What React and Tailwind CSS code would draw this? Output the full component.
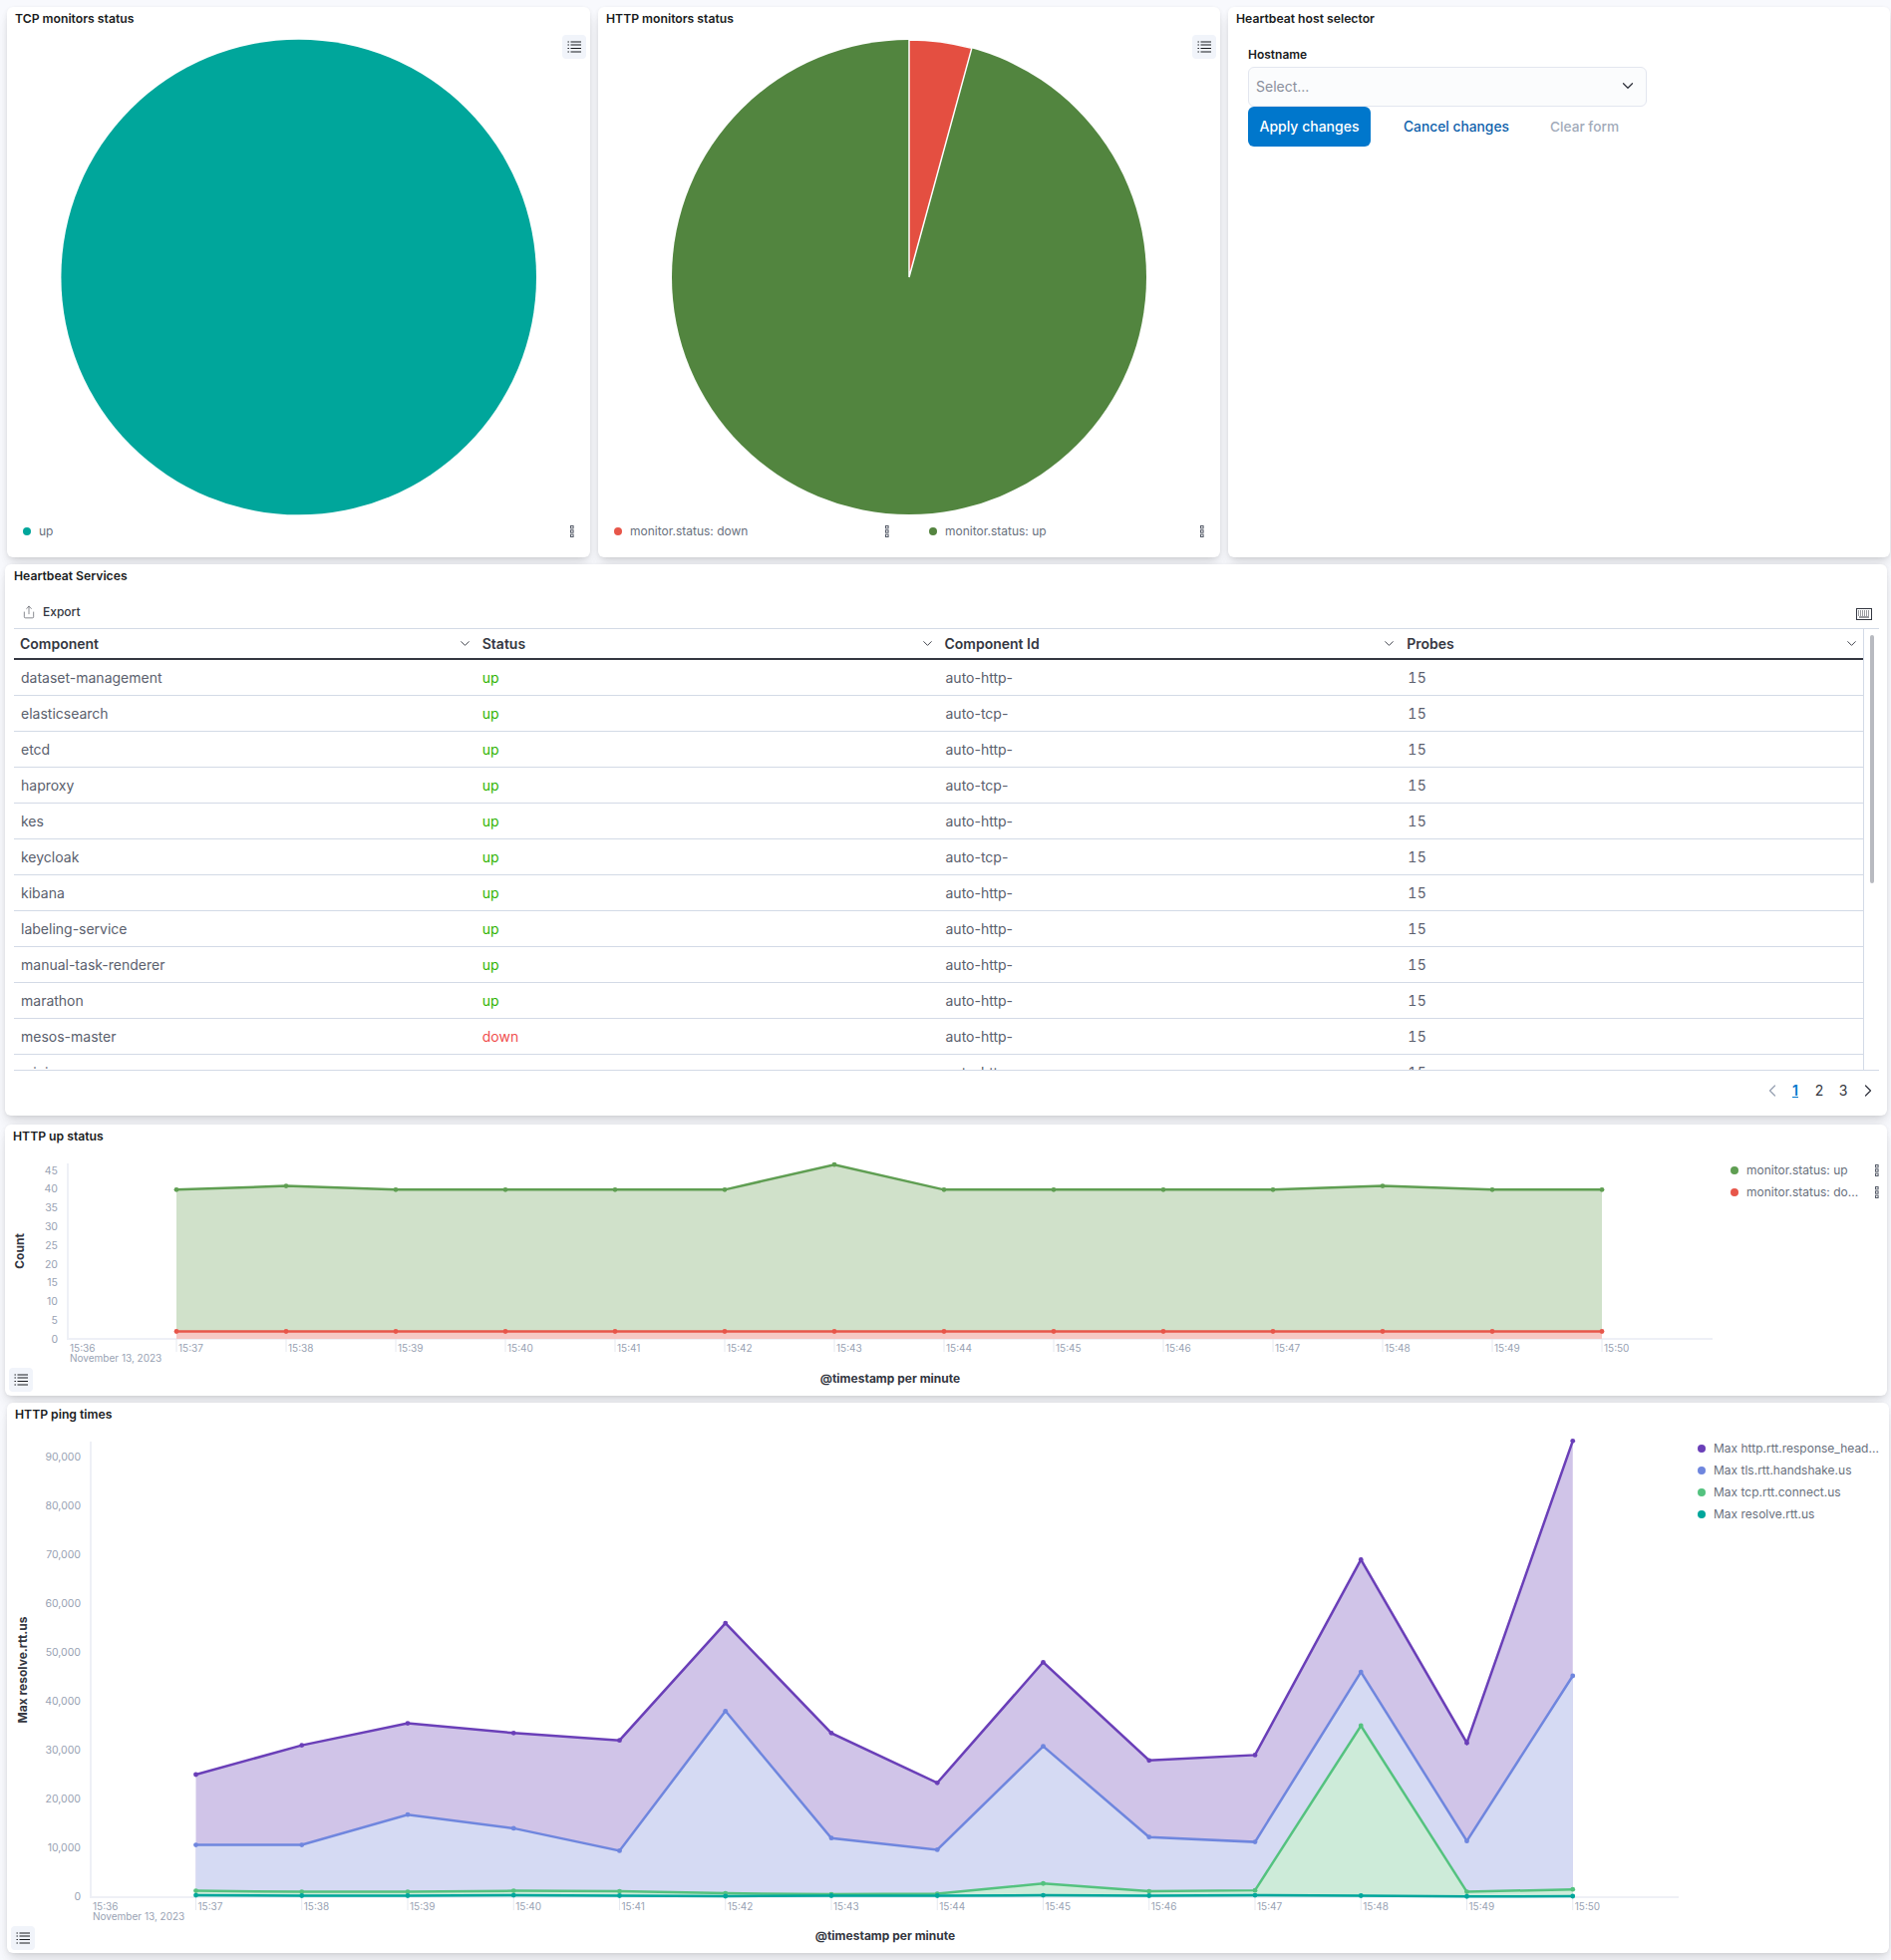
import React from 'react';
import { ChevronDown, ChevronLeft, ChevronRight, Share } from 'lucide-react';

const rows = [
    ['dataset-management', 'up', 'auto-http-'],
    ['elasticsearch', 'up', 'auto-tcp-'],
    ['etcd', 'up', 'auto-http-'],
    ['haproxy', 'up', 'auto-tcp-'],
    ['kes', 'up', 'auto-http-'],
    ['keycloak', 'up', 'auto-tcp-'],
    ['kibana', 'up', 'auto-http-'],
    ['labeling-service', 'up', 'auto-http-'],
    ['manual-task-renderer', 'up', 'auto-http-'],
    ['marathon', 'up', 'auto-http-'],
    ['mesos-master', 'down', 'auto-http-'],
    ['minio', 'up', 'auto-http-'],
];

const minutes = ['15:37', '15:38', '15:39', '15:40', '15:41', '15:42', '15:43', '15:44', '15:45', '15:46', '15:47', '15:48', '15:49', '15:50'];

const upSeries = [
    { values: [2, 2, 2, 2, 2, 2, 2, 2, 2, 2, 2, 2, 2, 2], line: '#e7564a', area: '#f6c8c4' },
];
const upTop = { values: [39.8, 40.8, 39.8, 39.8, 39.8, 39.8, 46.5, 39.8, 39.8, 39.8, 39.8, 40.8, 39.8, 39.8], line: '#5f9e52', area: '#d0e1ca' };

const pingSeries = [
    { values: [25000, 31000, 35500, 33500, 32000, 56000, 33500, 23300, 48000, 27900, 29000, 69000, 31500, 93300], line: '#6a3fb8', area: '#d0c4e8' },
    { values: [10600, 10600, 16800, 14000, 9400, 38000, 12000, 9600, 30800, 12200, 11200, 46000, 11400, 45200], line: '#6f86de', area: '#d5daf3' },
    { values: [1200, 1000, 1000, 1200, 1100, 700, 500, 600, 2700, 1100, 1300, 35000, 1000, 1500], line: '#54c27f', area: '#cdebd9' },
    { values: [300, 200, 200, 300, 200, 100, 200, 200, 300, 200, 300, 200, 50, 100], line: '#00a69b', area: '#b5e5e0' },
];

const ListIcon = () => (
    <svg width="14" height="12" viewBox="0 0 14 12" fill="#1a1c21">
        {[1, 4, 7.5, 11].map((y) => (
            <g key={y}>
                <rect x="0.5" y={y - 0.5} width="1.4" height="1" />
                <rect x="3.5" y={y - 0.5} width="10.5" height="1" />
            </g>
        ))}
    </svg>
);

const BoxesIcon = () => (
    <svg width="4" height="12" viewBox="0 0 4 12" fill="none" stroke="#535966" strokeWidth="1">
        <rect x="0.5" y="0.5" width="2.6" height="2.4" />
        <rect x="0.5" y="4.8" width="2.6" height="2.4" />
        <rect x="0.5" y="9.1" width="2.6" height="2.4" />
    </svg>
);

const KeyboardIcon = () => (
    <svg width="16" height="12" viewBox="0 0 16 12" fill="none" stroke="#343741">
        <rect x="0.5" y="0.5" width="15" height="11" />
        <path d="M2 3h12M2 5h12M2 7h12" strokeDasharray="1 1" />
        <path d="M3 9h10" />
    </svg>
);

const Card = ({ className, children }) => (
    <div className={`relative bg-white rounded-[6px] shadow-[0_1px_4px_-1px_rgba(0,0,0,0.08),0_3px_8px_-1px_rgba(0,0,0,0.06),0_6px_12px_-1px_rgba(0,0,0,0.05),0_15px_15px_-1px_rgba(0,0,0,0.04)] ${className}`}>
        {children}
    </div>
);

const Title = ({ className, children }) => (
    <div className={`h-6 flex items-center text-[12.2px] font-semibold text-[#1a1c21] ${className}`}>{children}</div>
);

const ListButton = ({ className }) => (
    <div className={`absolute w-6 h-6 rounded-[4px] bg-[#f1f4fa] flex items-center justify-center ${className}`}>
        <ListIcon />
    </div>
);

const LegendItem = ({ color, label, menu, className }) => (
    <div className={`h-[22px] flex items-center text-[12px] text-[#69707d] ${className}`}>
        <span className={`w-2 h-2 rounded-full shrink-0 mr-2 ${color}`}></span>
        <span className="flex-1 whitespace-nowrap">{label}</span>
        {menu && <BoxesIcon />}
    </div>
);

const PieCard = ({ title, className, children, legend, listButton }) => (
    <Card className={`h-[552px] flex flex-col ${className}`}>
        <Title className="pl-[8px]">{title}</Title>
        <svg className="block w-full h-[491px]">{children}</svg>
        <div className="flex pl-4 gap-[40px]">{legend}</div>
        {listButton && <ListButton className="top-7 right-1" />}
    </Card>
);

const Series = ({ values, line, area, xAt, yAt, base, width = 2.5 }) => {
    const pts = values.map((v, i) => [xAt(i), yAt(v)]);
    const d = pts.map(([x, y]) => `${x},${y}`).join(' ');
    return (
        <g>
            <polygon points={`${xAt(0)},${base} ${d} ${xAt(13)},${base}`} fill={area} />
            <polyline points={d} fill="none" stroke={line} strokeWidth={width} />
            {pts.map(([x, y]) => (
                <circle key={x} cx={x} cy={y} r="2.4" fill={line} />
            ))}
        </g>
    );
};

const Axes = ({ left, top, bottom, right, xAt, yTicks, yAt, labelRight, xTitle, xTitleX, xTitleY, yTitle, yTitleX, yTitleY }) => (
    <g>
        <path d={`M${left} ${top}V${bottom}H${right}`} fill="none" stroke="#eef0f6" strokeWidth="2" />
        {yTicks.map((t) => (
            <text key={t} x={labelRight} y={yAt(t) + 1} textAnchor="end" dominantBaseline="middle" className="fill-[#98a2b3] text-[10.5px]">
                {t.toLocaleString('en-US')}
            </text>
        ))}
        <text x={left + 2} y={bottom + 10} dominantBaseline="middle" className="fill-[#98a2b3] text-[10px]">15:36</text>
        <text x={left + 2} y={bottom + 20.5} dominantBaseline="middle" className="fill-[#98a2b3] text-[10px]">November 13, 2023</text>
        {minutes.map((m, i) => (
            <g key={m}>
                <path d={`M${xAt(i)} ${bottom}v13`} stroke="#e6e9f0" />
                <text x={xAt(i) + 2} y={bottom + 10} dominantBaseline="middle" className="fill-[#98a2b3] text-[10px]">{m}</text>
            </g>
        ))}
        <text x={xTitleX} y={xTitleY} textAnchor="middle" dominantBaseline="middle" className="fill-[#343741] text-[12px] font-bold">{xTitle}</text>
        <text x={yTitleX} y={yTitleY} textAnchor="middle" dominantBaseline="middle" transform={`rotate(-90 ${yTitleX} ${yTitleY})`} className="fill-[#343741] text-[12px] font-bold">{yTitle}</text>
    </g>
);

const UpChart = () => {
    const xAt = (i) => 177 + 110 * i;
    const yAt = (v) => 1343 - v * 3.76;
    return (
        <svg className="block shrink-0 w-[1725px] h-[248px]" viewBox="5 1152 1725 248">
            <Axes
                left={68} top={1167} bottom={1343} right={1718} xAt={xAt} yAt={yAt} labelRight={58}
                yTicks={[0, 5, 10, 15, 20, 25, 30, 35, 40, 45]}
                xTitle="@timestamp per minute" xTitleX={893} xTitleY={1384}
                yTitle="Count" yTitleX={21} yTitleY={1255}
            />
            <Series {...upTop} xAt={xAt} yAt={yAt} base={1343} />
            {upSeries.map((s) => (
                <Series key={s.line} {...s} xAt={xAt} yAt={yAt} base={1343} />
            ))}
        </svg>
    );
};

const PingChart = () => {
    const xAt = (i) => 196.5 + 106.25 * i;
    const yAt = (v) => 1902.5 - v * 0.0049;
    return (
        <svg className="block shrink-0 w-[1690px] h-[528px]" viewBox="7 1431 1690 528">
            <Axes
                left={91} top={1446} bottom={1903} right={1684} xAt={xAt} yAt={yAt} labelRight={81}
                yTicks={[0, 10000, 20000, 30000, 40000, 50000, 60000, 70000, 80000, 90000]}
                xTitle="@timestamp per minute" xTitleX={888} xTitleY={1943}
                yTitle="Max resolve.rtt.us" yTitleX={23.5} yTitleY={1675}
            />
            {pingSeries.map((s) => (
                <Series key={s.line} {...s} xAt={xAt} yAt={yAt} base={1902.5} />
            ))}
        </svg>
    );
};

const HeaderCell = ({ label }) => (
    <div className="flex items-center justify-between pl-[6px] pr-[4px] text-[14px] font-semibold text-[#343741]">
        <span>{label}</span>
        <ChevronDown size={15} strokeWidth={1.5} className="text-[#343741]" />
    </div>
);

const App = () => {
    return (
        <div className="w-[1897px] h-[1966px] bg-[#f8f9fd] overflow-hidden font-['Inter',sans-serif] pt-[7px]">
            {/* Pies and host selector */}
            <div className="flex gap-2 pl-[7px]">
                <PieCard
                    title="TCP monitors status"
                    className="w-[585px]"
                    listButton
                    legend={<LegendItem color="bg-[#00a69b]" label="up" menu className="w-[553px]" />}
                >
                    <circle cx="292.7" cy="247" r="238.3" fill="#00a69b" />
                </PieCard>
                <PieCard
                    title="HTTP monitors status"
                    className="w-[624px]"
                    listButton
                    legend={
                        <>
                            <LegendItem color="bg-[#e7564a]" label="monitor.status: down" menu className="w-[276px]" />
                            <LegendItem color="bg-[#54843f]" label="monitor.status: up" menu className="w-[276px]" />
                        </>
                    }
                >
                    <circle cx="312" cy="247" r="238" fill="#52853f" />
                    <path d="M312 247V9A238 238 0 0 1 374.8 17.4Z" fill="#e44f41" stroke="#fff" strokeWidth="1.5" />
                </PieCard>
                <Card className="w-[664px] h-[552px]">
                    <Title className="pl-[8px]">Heartbeat host selector</Title>
                    <div className="pl-5 pt-4">
                        <div className="h-4 flex items-center text-[12px] font-semibold text-[#1a1c21]">Hostname</div>
                        <div className="mt-1 w-[400px] h-10 flex items-center justify-between pl-[7px] pr-[9px] pb-[2px] rounded-[6px] bg-[#fbfcfd] border border-[#e3e6ef] text-[14px] text-[#8a8f9c]">
                            <span>Select...</span>
                            <ChevronDown size={18} strokeWidth={1.75} className="text-[#343741]" />
                        </div>
                        <div className="flex items-center text-[14px] font-medium">
                            <button className="w-[123px] h-10 pb-[2px] rounded-[6px] bg-[#0077cc] text-white">Apply changes</button>
                            <span className="ml-[33px] text-[13.8px] text-[#0f62ac]">Cancel changes</span>
                            <span className="ml-[41px] text-[13.7px] text-[#a2abba]">Clear form</span>
                        </div>
                    </div>
                </Card>
            </div>

            {/* Services table */}
            <Card className="ml-[5px] mt-[7px] w-[1888px] h-[553px]">
                <Title className="pl-[9px]">Heartbeat Services</Title>
                <div className="relative ml-[9px] w-[1871px]">
                    <div className="h-10 flex items-end justify-between pb-2 pl-2 pr-[7px]">
                        <div className="flex items-center gap-[7px] h-4 text-[12px] font-medium text-[#343741]">
                            <Share size={14} strokeWidth={1} />
                            <span>Export</span>
                        </div>
                        <KeyboardIcon />
                    </div>
                    <div className="border-t border-[#d3dae6]">
                        <div className="w-[1856px] border-r border-[#d3dae6]">
                            <div className="h-[29px] grid grid-cols-4 border-b-2 border-[#343741] box-content">
                                <HeaderCell label="Component" />
                                <HeaderCell label="Status" />
                                <HeaderCell label="Component Id" />
                                <HeaderCell label="Probes" />
                            </div>
                            <div className="h-[411px] overflow-hidden">
                                {rows.map(([name, status, id]) => (
                                    <div key={name} className="h-9 grid grid-cols-4 items-center border-b border-[#d3dae6] text-[14px] text-[#5a606d]">
                                        <div className="pl-[7px]">{name}</div>
                                        <div className={`pl-[6px] ${status === 'up' ? 'text-[#2fb300]' : 'text-[#f04e4e]'}`}>{status}</div>
                                        <div className="pl-[7px]">{id}</div>
                                        <div className="pl-[7px] tabular-nums tracking-[0.5px]">15</div>
                                    </div>
                                ))}
                            </div>
                        </div>
                    </div>
                    <div className="absolute left-[1862px] top-[47px] w-[4px] h-[249px] rounded-full bg-[#b8bac0]"></div>
                    <div className="h-10 border-t border-[#d3dae6] flex items-center justify-end text-[14px] text-[#343741]">
                        <div className="w-6 flex justify-center pl-[2px]"><ChevronLeft size={20} strokeWidth={1.5} className="text-[#98a2b3]" /></div>
                        <div className="w-6 text-center font-semibold text-[#0077cc] underline">1</div>
                        <div className="w-6 text-center">2</div>
                        <div className="w-6 text-center">3</div>
                        <div className="w-6 flex justify-center pl-[1px]"><ChevronRight size={20} strokeWidth={1.5} /></div>
                    </div>
                </div>
            </Card>

            {/* HTTP up status */}
            <Card className="ml-[5px] mt-[9px] w-[1888px] h-[272px]">
                <Title className="pl-2">HTTP up status</Title>
                <div className="flex">
                    <UpChart />
                    <div className="flex-1 pt-[11px] pl-[6px] pr-2">
                        <LegendItem color="bg-[#5f9e52]" label="monitor.status: up" menu />
                        <LegendItem color="bg-[#e7564a]" label="monitor.status: do..." menu />
                    </div>
                </div>
                <ListButton className="left-1 bottom-1" />
            </Card>

            {/* HTTP ping times */}
            <Card className="ml-[7px] mt-[7px] w-[1888px] h-[552px]">
                <Title className="pl-2">HTTP ping times</Title>
                <div className="flex">
                    <PingChart />
                    <div className="flex-1 pt-[11px] pl-[6px]">
                        <LegendItem color="bg-[#6a3fb8]" label="Max http.rtt.response_head..." />
                        <LegendItem color="bg-[#6f86de]" label="Max tls.rtt.handshake.us" />
                        <LegendItem color="bg-[#54c27f]" label="Max tcp.rtt.connect.us" />
                        <LegendItem color="bg-[#00a69b]" label="Max resolve.rtt.us" />
                    </div>
                </div>
                <ListButton className="left-1 bottom-[3px]" />
            </Card>
        </div>
    );
};

export default App;
